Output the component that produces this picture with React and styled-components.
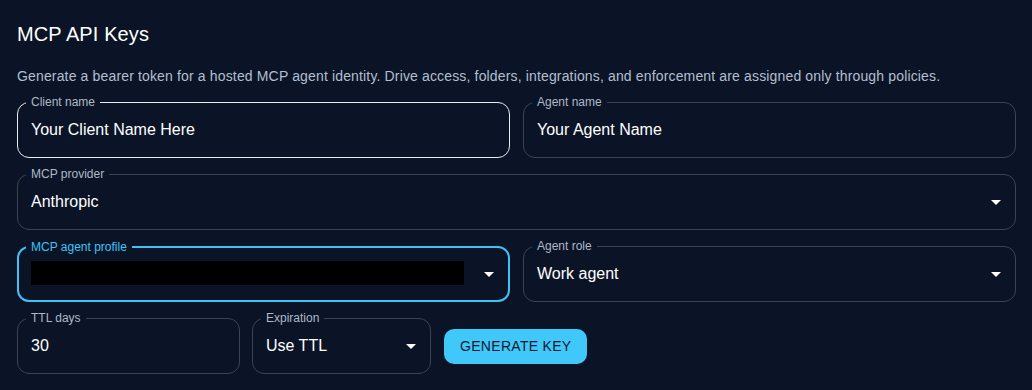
import styled, { createGlobalStyle } from "styled-components";

const GlobalStyle = createGlobalStyle`
  html, body {
    margin: 0;
    background: #0a1426;
  }
  body {
    font-family: "Liberation Sans", Arial, sans-serif;
  }
`;

const colors = {
  bg: "#0a1426",
  text: "#ffffff",
  muted: "#b3bfcf",
  label: "#aeb8c6",
  outline: "#3a4454",
  hover: "#e8ebf0",
  accent: "#3fc3f7",
};

const ArrowDown = () => (
  <Arrow viewBox="0 0 24 24" aria-hidden="true">
    <path d="M7 10l5 5 5-5z" fill="currentColor" />
  </Arrow>
);

const Field = ({ label, value, select, state, redacted }) => (
  <Box $state={state}>
    <Label $state={state}>{label}</Label>
    {redacted ? <Redacted /> : <Value>{value}</Value>}
    {select && <ArrowDown />}
  </Box>
);

export default function App() {
  return (
    <>
      <GlobalStyle />
      <Page>
        <Title>MCP API Keys</Title>
        <Description>
          Generate a bearer token for a hosted MCP agent identity. Drive access, folders,
          integrations, and enforcement are assigned only through policies.
        </Description>
        <Form>
          <Row>
            <Field label="Client name" value="Your Client Name Here" state="hover" />
            <Field label="Agent name" value="Your Agent Name" />
          </Row>
          <Field label="MCP provider" value="Anthropic" select />
          <Row>
            <Field label="MCP agent profile" select redacted state="focus" />
            <Field label="Agent role" value="Work agent" select />
          </Row>
          <Actions>
            <Cell $width={223}>
              <Field label="TTL days" value="30" />
            </Cell>
            <Cell $width={179}>
              <Field label="Expiration" value="Use TTL" select />
            </Cell>
            <Button>Generate key</Button>
          </Actions>
        </Form>
      </Page>
    </>
  );
}

const Page = styled.main`
  padding: 18px 16px 16px 17px;
  color: ${colors.text};
`;

const Title = styled.h2`
  margin: 0;
  font-size: 20px;
  line-height: 32px;
  font-weight: 400;
  letter-spacing: 0.1px;
`;

const Description = styled.p`
  margin: 16px 0 16px;
  font-size: 14px;
  line-height: 20px;
  letter-spacing: 0.15px;
  color: ${colors.muted};
  white-space: nowrap;
`;

const Form = styled.div`
  display: flex;
  flex-direction: column;
  gap: 16px;
`;

const Row = styled.div`
  display: grid;
  grid-template-columns: 1fr 1fr;
  gap: 13px;
`;

const Actions = styled.div`
  display: flex;
  align-items: center;
  gap: 12px;
`;

const Cell = styled.div`
  width: ${(p) => p.$width}px;
  flex: none;
`;

const borderColor = (state) =>
  state === "focus" ? colors.accent : state === "hover" ? colors.hover : colors.outline;

const Box = styled.div`
  position: relative;
  box-sizing: border-box;
  height: 56px;
  display: flex;
  align-items: center;
  padding: 0 ${(p) => (p.$state === "focus" ? 12 : 13)}px 2px;
  border: ${(p) => (p.$state === "focus" ? 2 : 1)}px solid ${(p) => borderColor(p.$state)};
  border-radius: 12px;
`;

const Label = styled.span`
  position: absolute;
  top: -8px;
  left: ${(p) => (p.$state === "focus" ? 7 : 8)}px;
  padding: 0 5px;
  background: ${colors.bg};
  font-size: 12px;
  line-height: 14px;
  color: ${(p) => (p.$state === "focus" ? colors.accent : colors.label)};
`;

const Value = styled.span`
  font-size: 16px;
  line-height: 23px;
  color: ${colors.text};
`;

const Redacted = styled.span`
  display: block;
  width: 433px;
  height: 24px;
  background: #000;
`;

const Arrow = styled.svg`
  position: absolute;
  right: 7px;
  top: 50%;
  width: 24px;
  height: 24px;
  margin-top: -12px;
  color: #fff;
`;

const Button = styled.button`
  margin-left: 1px;
  height: 35px;
  padding: 0 16px;
  border: none;
  border-radius: 10px;
  background: #40c8fb;
  color: #0b1a2a;
  font-family: "Liberation Sans", Arial, sans-serif;
  font-size: 14px;
  letter-spacing: 0.3px;
  text-transform: uppercase;
  cursor: pointer;
`;
